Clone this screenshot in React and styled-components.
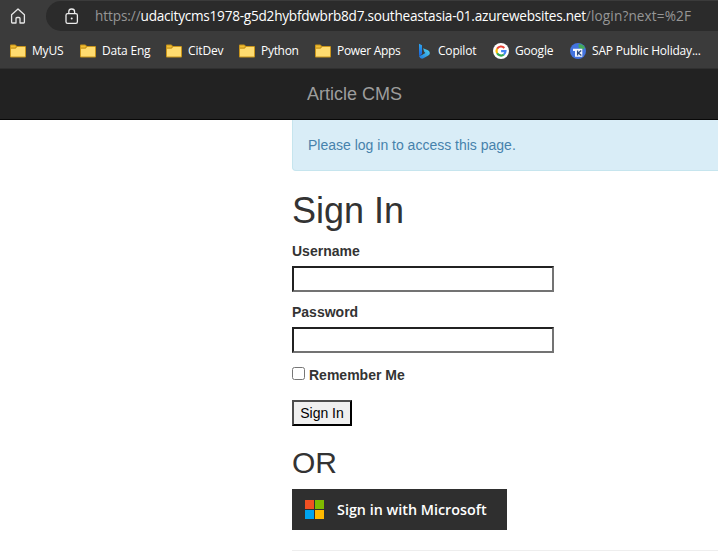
import React from "react";
import styled, { createGlobalStyle } from "styled-components";

const GlobalStyle = createGlobalStyle`
  *, *::before, *::after { box-sizing: border-box; }
  html, body { margin: 0; background: #fff; overflow: hidden; }
  body { font: 14px/20px "Liberation Sans", Arial, sans-serif; color: #333; }
`;

const Window = styled.div`
  height: 554px;
  display: flex;
  flex-direction: column;
  overflow: hidden;
`;

const BrowserChrome = styled.header`
  flex: none;
  height: 69px;
  background: #3b3b3b;
  border-bottom: 1px solid #303030;
  font-family: "Open Sans", "Noto Sans", sans-serif;
  color: #fff;
`;

const Toolbar = styled.div`
  height: 32px;
  display: flex;
  align-items: flex-start;
`;

const HomeButton = styled.span`
  width: 46px;
  padding: 8px 0 0 10px;
  line-height: 0;
`;

const AddressBar = styled.div`
  flex: 1;
  height: 30px;
  margin-top: 1px;
  padding-left: 18px;
  display: flex;
  align-items: center;
  background: #2b2b2b;
  border-radius: 16px 0 0 16px;
`;

const LockIcon = styled.svg`
  flex: none;
  width: 15px;
  height: 17px;
  margin-right: 16px;
`;

const Address = styled.span`
  font-size: 13.6px;
  line-height: 20px;
  letter-spacing: -0.238px;
  white-space: nowrap;
  color: #fff;
`;

const Scheme = styled.span`
  color: #969696;
  letter-spacing: -0.1px;
`;

const Path = styled.span`
  color: #969696;
  letter-spacing: 0.13px;
`;

const Bookmarks = styled.nav`
  height: 37px;
  padding-left: 10px;
  display: flex;
  align-items: center;
`;

const Bookmark = styled.span`
  flex: none;
  width: ${(p) => p.$width}px;
  display: flex;
  align-items: center;
  gap: 6px;
  font-size: 12px;
  line-height: 18px;
  letter-spacing: ${(p) => p.$tracking || 0}px;
  white-space: nowrap;

  svg { flex: none; }
`;

const Navbar = styled.nav`
  flex: none;
  height: 51px;
  padding: 15px 0 0 307px;
  background: #222;
  border-bottom: 1px solid #080808;
  font-size: 18px;
  line-height: 20px;
  color: #9d9d9d;
`;

const Container = styled.main`
  width: 750px;
  margin-left: 292px;
`;

const Alert = styled.div`
  height: 51px;
  padding: 15px;
  background: #d9edf7;
  border: 1px solid #c6e5ee;
  border-top: 0;
  border-radius: 0 0 4px 4px;
  color: #4682ac;
`;

const Title = styled.h1`
  margin: 20px 0 10px;
  font-size: 36px;
  font-weight: 500;
  line-height: 40px;
`;

const Field = styled.div`
  height: 61px;
  display: flex;
  flex-direction: column;
  align-items: flex-start;
`;

const Label = styled.label`
  margin-bottom: 5px;
  font-weight: 700;
`;

const TextInput = styled.input`
  width: 262px;
  height: 26px;
  padding: 1px 2px;
  border: 2px solid;
  border-color: #212121 #737373 #737373 #212121;
  border-radius: 0;
  background: #fff;
  outline: none;
`;

const Remember = styled.label`
  height: 20px;
  margin-top: 2px;
  display: flex;
  align-items: flex-start;
  gap: 4px;
  font-weight: 700;
`;

const Checkbox = styled.input`
  width: 13px;
  height: 13px;
  margin: 2px 0 0;
`;

const SubmitButton = styled.button`
  display: block;
  width: 60px;
  height: 26px;
  margin-top: 15px;
  padding: 1px 0;
  border: 2px solid;
  border-color: #4c4c4c #000 #000 #4c4c4c;
  border-radius: 0;
  background: #efefef;
  color: #000;
  font: 14px/20px "Liberation Sans", Arial, sans-serif;
`;

const Subtitle = styled.h2`
  margin: 20px 0 10px;
  font-size: 30px;
  font-weight: 500;
  line-height: 33px;
`;

const MicrosoftButton = styled.button`
  width: 215px;
  height: 41px;
  padding: 0 0 0 13px;
  display: flex;
  align-items: center;
  gap: 13px;
  border: 0;
  background: #2f2f2f;
  color: #fff;
  font: 600 14.35px/20px "Open Sans", "Noto Sans", sans-serif;
  white-space: nowrap;
`;

const Divider = styled.hr`
  height: 1px;
  margin: 20px 0 0;
  border: 0;
  background: #eee;
`;

const FolderIcon = () => (
  <svg width="16" height="16" viewBox="0 0 16 16">
    <path d="M0 2.5Q0 1.5 1 1.5H5.2L7 3H15Q16 3 16 4V13.5Q16 14.5 15 14.5H1Q0 14.5 0 13.5Z" fill="#c9951b" />
    <path d="M1 2.5H5L6 3.5 5 4.6H1Z" fill="#f0bd32" />
    <path d="M1 5.7H5.5L7.2 4H15V13.5H1Z" fill="#ffdc70" />
  </svg>
);

const CopilotIcon = () => (
  <svg width="16" height="16" viewBox="0 0 16 16">
    <defs>
      <linearGradient id="stem" x1="0" y1="0" x2="0" y2="1">
        <stop offset="0" stopColor="#2da7ef" />
        <stop offset="1" stopColor="#1860dc" />
      </linearGradient>
      <linearGradient id="bowl" x1="0" y1="1" x2="1" y2="0">
        <stop offset="0" stopColor="#1977df" />
        <stop offset="1" stopColor="#55d9ef" />
      </linearGradient>
    </defs>
    <path d="M3 .8L6 2.2V11L3 13Z" fill="url(#stem)" />
    <path d="M7.1 5.2L12 7.3Q13.8 8.2 13.8 10C13.8 11.4 12.9 12.2 11.9 12.8L7 15.5Q4 16.2 3 13L6 12 9.3 10 8.2 8.8Z" fill="url(#bowl)" />
  </svg>
);

const GoogleIcon = () => (
  <svg width="16" height="16" viewBox="0 0 16 16">
    <circle cx="8" cy="8" r="8" fill="#fff" />
    <g fill="none" strokeWidth="2.2">
      <path d="M4.1 5.8A4.5 4.5 0 0 1 11.3 4.9" stroke="#ea4335" />
      <path d="M4.1 5.8A4.5 4.5 0 0 0 4.1 10.2" stroke="#fbbc05" />
      <path d="M4.1 10.2A4.5 4.5 0 0 0 10.9 11.5" stroke="#34a853" />
      <path d="M10.9 11.5A4.5 4.5 0 0 0 12.5 8.1H8.1" stroke="#4285f4" />
    </g>
  </svg>
);

const HolidayIcon = () => (
  <svg width="16" height="16" viewBox="0 0 16 16">
    <circle cx="8" cy="8" r="8" fill="#4373df" />
    <path d="M8.5 1.2Q12.5.5 15 4.8L13 6.5 10.8 5.4 8.7 5Z" fill="#43a85b" />
    <path d="M3 5.7H12.3V13.8H5V8H3Z" fill="#f4f7ff" />
    <path d="M7.6 7.5V12.5M11.2 7.5L8.3 10L11.4 12.5" stroke="#28477e" strokeWidth="1.3" fill="none" />
  </svg>
);

const MicrosoftLogo = () => (
  <svg width="19" height="19" viewBox="0 0 19 19">
    <path fill="#f25022" d="M0 0H9V9H0z" />
    <path fill="#7fba00" d="M10 0H19V9H10z" />
    <path fill="#00a4ef" d="M0 10H9V19H0z" />
    <path fill="#ffb900" d="M10 10H19V19H10z" />
  </svg>
);

const bookmarks = [
  { label: "MyUS", icon: FolderIcon, width: 70, tracking: -0.2 },
  { label: "Data Eng", icon: FolderIcon, width: 86, tracking: -0.2 },
  { label: "CitDev", icon: FolderIcon, width: 73, tracking: -0.15 },
  { label: "Python", icon: FolderIcon, width: 76, tracking: -0.3 },
  { label: "Power Apps", icon: FolderIcon, width: 101, tracking: -0.3 },
  { label: "Copilot", icon: CopilotIcon, width: 77, tracking: -0.2 },
  { label: "Google", icon: GoogleIcon, width: 77, tracking: -0.2 },
  { label: "SAP Public Holiday...", icon: HolidayIcon, width: 140, tracking: -0.2 },
];

export default function App() {
  return (
    <Window>
      <GlobalStyle />
      <BrowserChrome>
        <Toolbar>
          <HomeButton>
            <svg width="16" height="16" viewBox="0 0 16 16" fill="none" stroke="#e6e6e6" strokeWidth="1.3" strokeLinejoin="round">
              <path d="M1.6 6.8L8 1 14.4 6.8V14.3Q14.4 15 13.7 15H10V10.5Q10 9.5 9 9.5H7Q6 9.5 6 10.5V15H2.3Q1.6 15 1.6 14.3Z" />
            </svg>
          </HomeButton>
          <AddressBar>
            <LockIcon viewBox="0 0 15 17" fill="none" stroke="#ececec" strokeWidth="1.3">
              <rect x="2" y="5.6" width="11.4" height="9.8" rx="1.6" />
              <path d="M4.8 5.6V3.7Q4.8 1 7.7 1T10.6 3.7V5.6" />
              <circle cx="7.7" cy="10.5" r="1" fill="#ececec" stroke="none" />
            </LockIcon>
            <Address>
              <Scheme>https://</Scheme>
              udacitycms1978-g5d2hybfdwbrb8d7.southeastasia-01.azurewebsites.net
              <Path>/login?next=%2F</Path>
            </Address>
          </AddressBar>
        </Toolbar>
        <Bookmarks>
          {bookmarks.map(({ label, icon: Icon, width, tracking }) => (
            <Bookmark key={label} $width={width} $tracking={tracking}>
              <Icon />
              {label}
            </Bookmark>
          ))}
        </Bookmarks>
      </BrowserChrome>
      <Navbar>Article CMS</Navbar>
      <Container>
        <Alert>Please log in to access this page.</Alert>
        <Title>Sign In</Title>
        <Field>
          <Label htmlFor="username">Username</Label>
          <TextInput id="username" type="text" />
        </Field>
        <Field>
          <Label htmlFor="password">Password</Label>
          <TextInput id="password" type="password" />
        </Field>
        <Remember>
          <Checkbox type="checkbox" />
          Remember Me
        </Remember>
        <SubmitButton type="button">Sign In</SubmitButton>
        <Subtitle>OR</Subtitle>
        <MicrosoftButton type="button">
          <MicrosoftLogo />
          Sign in with Microsoft
        </MicrosoftButton>
        <Divider />
      </Container>
    </Window>
  );
}
